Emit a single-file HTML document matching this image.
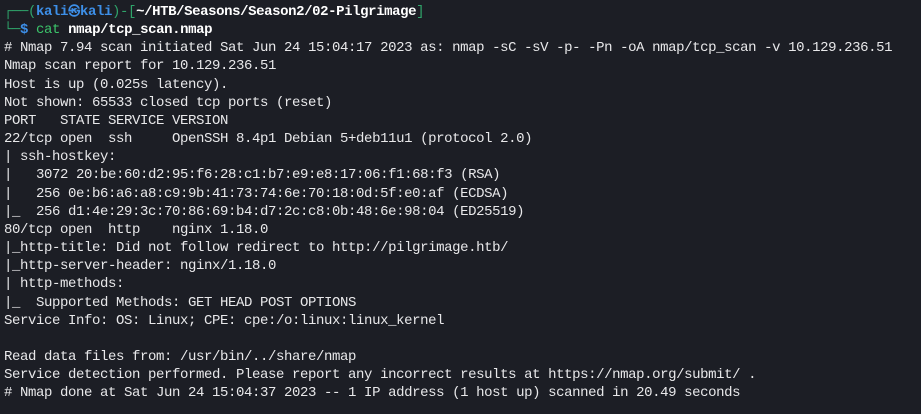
<!DOCTYPE html>
<html><head><style>
html,body{margin:0;padding:0;background:#1c1e25;width:921px;height:414px;overflow:hidden}
pre{margin:0;padding:3px 0 0 4px;font-family:"Liberation Mono","DejaVu Sans Mono",monospace;font-size:14px;letter-spacing:-0.4px;line-height:18.15px;color:#e8e8ea;white-space:pre}
.g{color:#2fa46a}.b{color:#3d8fe8;font-weight:bold}.w{color:#fff;font-weight:bold}.c{color:#3bc46a}
.k{display:inline-block;width:12px;font-size:12px;text-align:center}
</style></head><body><pre><span class="g">┌──(</span><span class="b">kali<span class="k">㉿</span>kali</span><span class="g">)-[</span><span class="w">~/HTB/Seasons/Season2/02-Pilgrimage</span><span class="g">]</span>
<span class="g">└─</span><span class="b">$</span> <span class="c">cat</span> <span class="w">nmap/tcp_scan.nmap</span>
# Nmap 7.94 scan initiated Sat Jun 24 15:04:17 2023 as: nmap -sC -sV -p- -Pn -oA nmap/tcp_scan -v 10.129.236.51
Nmap scan report for 10.129.236.51
Host is up (0.025s latency).
Not shown: 65533 closed tcp ports (reset)
PORT   STATE SERVICE VERSION
22/tcp open  ssh     OpenSSH 8.4p1 Debian 5+deb11u1 (protocol 2.0)
| ssh-hostkey: 
|   3072 20:be:60:d2:95:f6:28:c1:b7:e9:e8:17:06:f1:68:f3 (RSA)
|   256 0e:b6:a6:a8:c9:9b:41:73:74:6e:70:18:0d:5f:e0:af (ECDSA)
|_  256 d1:4e:29:3c:70:86:69:b4:d7:2c:c8:0b:48:6e:98:04 (ED25519)
80/tcp open  http    nginx 1.18.0
|_http-title: Did not follow redirect to http://pilgrimage.htb/
|_http-server-header: nginx/1.18.0
| http-methods: 
|_  Supported Methods: GET HEAD POST OPTIONS
Service Info: OS: Linux; CPE: cpe:/o:linux:linux_kernel

Read data files from: /usr/bin/../share/nmap
Service detection performed. Please report any incorrect results at https://nmap.org/submit/ .
# Nmap done at Sat Jun 24 15:04:37 2023 -- 1 IP address (1 host up) scanned in 20.49 seconds</pre></body></html>
